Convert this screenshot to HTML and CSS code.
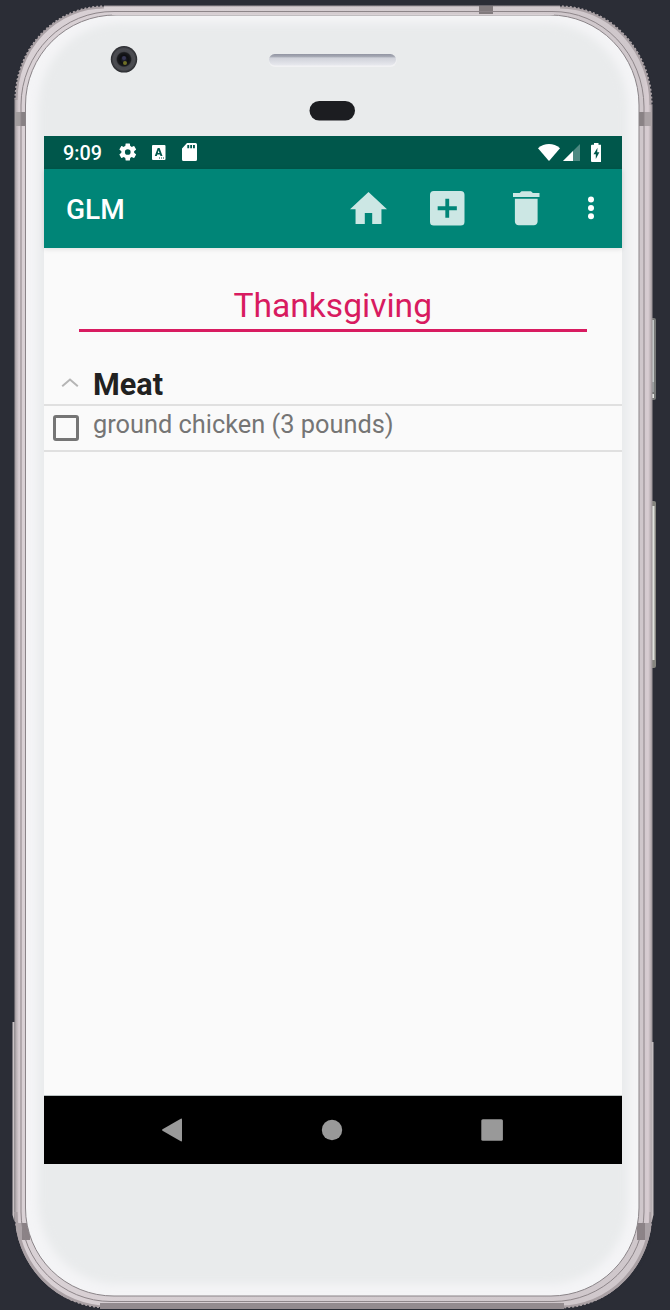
FILE: index.html
```html
<!DOCTYPE html>
<html lang="en">
<head>
<meta charset="utf-8">
<title>GLM</title>
<link rel="stylesheet" href="styles.css">
</head>
<body>
<div class="phone">
  <svg class="shell" viewBox="0 0 670 1310" aria-hidden="true">
    <defs>
      <linearGradient id="metal" x1="0" x2="1" y1="0" y2="0">
        <stop offset="0" stop-color="#aaa3a6"/><stop offset=".006" stop-color="#d5cbd0"/>
        <stop offset=".013" stop-color="#d9d1d5"/><stop offset=".985" stop-color="#cfc7cb"/>
        <stop offset=".994" stop-color="#d8cdd2"/><stop offset="1" stop-color="#a9a1a5"/>
      </linearGradient>
      <linearGradient id="speaker" x1="0" x2="0" y1="0" y2="1">
        <stop offset="0" stop-color="#9194a2"/><stop offset=".22" stop-color="#a6a9b4"/>
        <stop offset=".35" stop-color="#d0d2da"/><stop offset="1" stop-color="#e8e9ee"/>
      </linearGradient>
      <radialGradient id="lens">
        <stop offset="0" stop-color="#28283a"/><stop offset=".3" stop-color="#0e0f12"/>
        <stop offset=".5" stop-color="#191a1d"/><stop offset=".6" stop-color="#48494e"/>
        <stop offset=".8" stop-color="#4c4d52"/><stop offset="1" stop-color="#26272b"/>
      </radialGradient>
      <filter id="soft" x="-5%" y="-5%" width="110%" height="110%"><feGaussianBlur stdDeviation="4"/></filter>
      <clipPath id="body-clip"><path d="M104 6H560A92 99 0 0 1 652 105V1212A92 96 0 0 1 560 1308H108A93 96 0 0 1 15 1212V100A89 94 0 0 1 104 6Z"/></clipPath>
    </defs>
    <g>
      <rect x="649" y="318" width="7" height="82" rx="2" fill="#777978"/>
      <rect x="651" y="320" width="3" height="62" fill="#c3c8c8"/>
      <rect x="651" y="382" width="3" height="10" fill="#999e9f"/>
      <rect x="651" y="394" width="3" height="4" fill="#e5e8e5"/>
      <rect x="649" y="501" width="7" height="167" rx="2" fill="#85857f"/>
      <rect x="651" y="506" width="3.5" height="154" fill="#dfe2dd"/>
    </g>
    <path d="M104 6H560A92 99 0 0 1 652 105V1212A92 96 0 0 1 560 1308H108A93 96 0 0 1 15 1212V100A89 94 0 0 1 104 6Z" fill="url(#metal)" stroke="#a0989c" stroke-width="1"/>
    <g fill="none" stroke="#aaa1a5" stroke-width="3">
      <path d="M104 7A88 93 0 0 0 16 100"/>
      <path d="M560 7A91 98 0 0 1 651 105"/>
      <path d="M16 1212A92 95 0 0 0 108 1307"/>
      <path d="M651 1212A91 95 0 0 1 560 1307"/>
    </g>
    <g fill="none" stroke="#2b2d36" stroke-width="2" stroke-dasharray="2 2">
      <path d="M104 5.500A89.500 94.500 0 0 0 14.500 100"/>
      <path d="M560 5.500A92.500 99.500 0 0 1 652.500 105"/>
      <path d="M14.500 1222A93.500 86.500 0 0 0 108 1308.500"/>
      <path d="M652.500 1222A92.500 86.500 0 0 1 560 1308.500"/>
    </g>
    <path d="M14.500 1022H12.500V1215L14.500 1222Z" fill="#c9c1c4"/>
    <path d="M651.500 1042H653.500V1215L651.500 1222Z" fill="#c4bdc0"/>
    <rect x="100" y="1303" width="464" height="6" fill="#938b8f"/>
    <g clip-path="url(#body-clip)">
      <rect x="14" y="112" width="13" height="14" fill="#a39d9f"/>
      <rect x="21" y="112" width="6" height="14" fill="#878184"/>
      <rect x="639" y="112" width="13" height="14" fill="#aaa2a5"/>
      <rect x="639" y="112" width="5" height="14" fill="#898285"/>
      <rect x="479" y="6" width="14" height="9" fill="#817a7d"/>
      <rect x="14" y="1223" width="16" height="17" fill="#aca3a7"/>
      <rect x="22" y="1223" width="8" height="17" fill="#8b8286"/>
      <rect x="637" y="1223" width="16" height="17" fill="#aaa2a6"/>
      <rect x="637" y="1223" width="8" height="17" fill="#8c8387"/>
    </g>
    <path d="M114 11.500H552A91 96 0 0 1 644 107V1212A91 90 0 0 1 553 1301.500H111A90 90 0 0 1 21 1212V105A92 94 0 0 1 114 11.500Z" fill="none" stroke="#8d8589" stroke-width="1"/>
    <path d="M116 15H550A89 90 0 0 1 639 105V1208A88 88 0 0 1 551 1296H114A88 88 0 0 1 25.500 1208V105A90 90 0 0 1 116 15Z" fill="#f4f4f6" stroke="#8a8488" stroke-width="1"/>
    <path d="M112 14.500H554" stroke="#d8d0d4"/>
    <path d="M120 23H546A82 86 0 0 1 628 109V1200A78 82 0 0 1 550 1284H116A78 84 0 0 1 38 1200V109A82 86 0 0 1 120 23Z" fill="#e9ebec" filter="url(#soft)"/>
    <circle cx="124" cy="59.300" r="13.200" fill="url(#lens)"/>
    <circle cx="124" cy="58" r="2" fill="#363654"/>
    <circle cx="125" cy="63" r="2" fill="#707026"/>
    <rect x="269" y="55" width="127.500" height="12" rx="6" fill="#f2f2f4"/>
    <rect x="269" y="54" width="127" height="11.500" rx="5.700" fill="url(#speaker)"/>
    <rect x="309.500" y="101" width="45.500" height="19.500" rx="9.700" fill="#1c1d21"/>
  </svg>

  <main class="screen">
    <header class="status">
      <span class="clock">9:09</span>
      <svg class="gear" viewBox="2.200 2 19.600 20"><path d="M19.140 12.940c.04-.3.060-.61.060-.94s-.02-.64-.07-.94l2.030-1.580a.49.490 0 0 0 .12-.61l-1.920-3.320a.488.488 0 0 0-.59-.22l-2.390.96c-.5-.38-1.030-.7-1.620-.94l-.36-2.540a.484.484 0 0 0-.48-.41h-3.840c-.24 0-.43.170-.47.410l-.36 2.540c-.59.240-1.130.570-1.620.940l-2.390-.96c-.22-.08-.47 0-.59.220L2.740 8.870c-.12.210-.08.470.12.610l2.030 1.580c-.05.300-.09.630-.09.940s.02.640.07.940l-2.030 1.580a.49.490 0 0 0-.12.610l1.920 3.320c.12.220.37.290.59.220l2.390-.96c.5.380 1.030.700 1.620.940l.36 2.540c.05.240.24.410.48.410h3.840c.24 0 .44-.17.47-.41l.36-2.540c.59-.24 1.130-.56 1.620-.94l2.390.96c.22.080.47 0 .59-.22l1.920-3.320c.12-.22.070-.47-.12-.61zM12 15.200a3.200 3.200 0 1 1 0-6.400 3.200 3.200 0 0 1 0 6.400z"/></svg>
      <svg class="letter" viewBox="0 0 13.500 15"><path fill-rule="evenodd" d="M1 0H12.500A1 1 0 0 1 13.500 1V14A1 1 0 0 1 12.500 15H1A1 1 0 0 1 0 14V1A1 1 0 0 1 1 0ZM5.700 3L2.800 11H4.800L5.300 9.500H8L8.500 11H10.500L7.600 3ZM6.650 5.300L7.500 8H5.800ZM7 12.500V13.500H8V12.500ZM9 12.500V13.500H10V12.500ZM11 12.500V13.500H12V12.500Z"/></svg>
      <svg class="card" viewBox="0 0 15 18"><path fill-rule="evenodd" d="M5 0H13.500Q15 0 15 1.500V16.500Q15 18 13.500 18H1.500Q0 18 0 16.500V5.500ZM5.300 2V5.300H7.200V2ZM8.200 2V5.300H10V2ZM11 2V5.300H12.900V2Z"/></svg>
      <span class="spacer"></span>
      <svg class="wifi" viewBox="0 0 22 17"><path d="M0 4.200Q5 0 11 0T22 4.200L11.500 16.600Q11 17 10.500 16.600Z"/></svg>
      <svg class="signal" viewBox="0 0 17 17"><path opacity=".3" d="M17 0V17H0Z"/><path d="M10 7V17H0Z"/></svg>
      <svg class="battery" viewBox="0 0 10.500 19"><path fill-rule="evenodd" d="M3 0H7.500V1.700H9.500Q10.500 1.700 10.500 2.700V18Q10.500 19 9.500 19H1Q0 19 0 18V2.700Q0 1.700 1 1.700H3ZM6.500 4.800L2.500 11.200H4.800V16L8.400 9.200H6.200Z"/></svg>
    </header>

    <nav class="appbar">
      <h1 class="title">GLM</h1>
      <svg class="home" viewBox="2 3 20 17" preserveAspectRatio="none"><path d="M10 20v-6h4v6h5v-8h3L12 3 2 12h3v8z"/></svg>
      <svg class="add" viewBox="3 3 18 18"><path d="M19 3H5a2 2 0 0 0-2 2v14a2 2 0 0 0 2 2h14a2 2 0 0 0 2-2V5a2 2 0 0 0-2-2zm-2 10h-4v4h-2v-4H7v-2h4V7h2v4h4z"/></svg>
      <svg class="trash" viewBox="5 3 14 18"><path d="M6 19c0 1.100.900 2 2 2h8c1.100 0 2-.9 2-2V7H6zM19 4h-3.500l-1-1h-5l-1 1H5v2h14z"/></svg>
      <svg class="more" viewBox="0 0 6 24"><circle cx="3" cy="3.500" r="3"/><circle cx="3" cy="12" r="3"/><circle cx="3" cy="20.300" r="3"/></svg>
    </nav>

    <section class="content">
      <div class="list-name"><span>Thanksgiving</span></div>
      <div class="group">
        <svg class="caret" viewBox="0 0 18 10"><path d="M1.200 8.300L9 1.600L16.800 8.300"/></svg>
        <h2 class="group-name">Meat</h2>
      </div>
      <div class="item">
        <span class="checkbox"></span>
        <span class="item-name">ground chicken (3 pounds)</span>
      </div>
    </section>

    <footer class="navbar">
      <svg viewBox="0 0 24 24"><path d="M2.500 11.200L20.800 .7Q22 .3 22 1.500V22.500Q22 23.700 20.800 23.300L2.500 12.800Q1.400 12 2.500 11.200Z"/></svg>
      <svg viewBox="0 0 24 24"><circle cx="12" cy="12" r="10.200"/></svg>
      <svg viewBox="0 0 24 24"><rect x="1.300" y="1.300" width="21.600" height="21.400" rx="1.500"/></svg>
    </footer>
  </main>
</div>
</body>
</html>
```
FILE: styles.css
```css
* {
  box-sizing: border-box;
}

body {
  margin: 0;
  background: #2b2d36;
  font-family: Roboto, "Liberation Sans", sans-serif;
}

.phone {
  position: relative;
  width: 670px;
  height: 1310px;
  padding: 136px 48px 146px 44px;
  overflow: hidden;
}

.shell {
  position: absolute;
  inset: 0;
  width: 670px;
  height: 1310px;
}

.screen {
  position: relative;
  display: flex;
  flex-direction: column;
  width: 578px;
  height: 1028px;
  background: #fafafa;
}

.status {
  display: flex;
  align-items: center;
  height: 33px;
  padding: 0 21px 0 19px;
  background: #00574b;
  fill: #fff;
}

.clock {
  width: 56px;
  padding-top: 2px;
  color: #fff;
  font-size: 19.800px;
  font-weight: 500;
  line-height: 31px;
}

.spacer {
  flex: 1;
}

.gear {
  width: 17.5px;
  height: 18px;
  margin: 0 15.500px 1px 0;
}

.letter {
  width: 13.500px;
  height: 15px;
  margin-right: 16.500px;
}

.card {
  width: 15px;
  height: 18px;
  margin-bottom: 1px;
}

.wifi {
  width: 22px;
  height: 17px;
  margin: 0 3px 1px 0;
}

.signal {
  width: 17px;
  height: 17px;
  margin-right: 10.500px;
}

.battery {
  width: 10.500px;
  height: 19px;
  margin-bottom: 1px;
}

.appbar {
  display: flex;
  align-items: center;
  height: 78.500px;
  padding: 0 28.500px 0 22px;
  background: #008577;
  box-shadow: 0 1px 5px rgba(0, 0, 0, .12);
  fill: #cce7e4;
}

.title {
  flex: 1;
  margin: 4px 0 0;
  color: #fff;
  font-size: 28px;
  font-weight: 500;
  line-height: 34px;
}

.home {
  width: 37px;
  height: 32.500px;
  margin: 0 43px 1px 0;
}

.add {
  width: 34.500px;
  height: 34.500px;
  margin-right: 48.500px;
}

.trash {
  width: 26.500px;
  height: 34.500px;
  margin-right: 48px;
}

.more {
  width: 6px;
  height: 24px;
  fill: #fff;
}

.content {
  flex: 1;
}

.list-name {
  height: 84.500px;
  margin: 0 35px 0 34.500px;
  padding-top: 37px;
  border-bottom: 3px solid #d81b60;
  color: #d81b60;
  font-size: 33.600px;
  line-height: 42px;
  text-align: center;
}

.group {
  display: flex;
  align-items: center;
  height: 73.500px;
  padding: 35px 0 0 17px;
  border-bottom: 2px solid #e0e0e0;
}

.caret {
  width: 18px;
  height: 10px;
  margin: 0 14px 5px 0;
  fill: none;
  stroke: #b5b5b5;
  stroke-width: 2px;
}

.group-name {
  margin: 0;
  color: #212121;
  font-size: 30.600px;
  font-weight: 700;
  line-height: 36px;
}

.item {
  display: flex;
  height: 46.500px;
  padding: 9.500px 0 0 9px;
  border-bottom: 2px solid #e0e0e0;
}

.checkbox {
  width: 26px;
  height: 26px;
  margin-right: 14px;
  border: 3px solid #757575;
  border-radius: 3px;
}

.item-name {
  margin-top: -6px;
  color: #757575;
  font-size: 25.350px;
  line-height: 30px;
}

.navbar {
  display: flex;
  align-items: center;
  justify-content: center;
  gap: 136px;
  height: 69px;
  padding: 0 2px 1px 0;
  border-top: 1px solid #b9c1c1;
  background: #000;
  fill: #999;
}

.navbar svg {
  width: 24px;
  height: 24px;
}
```
